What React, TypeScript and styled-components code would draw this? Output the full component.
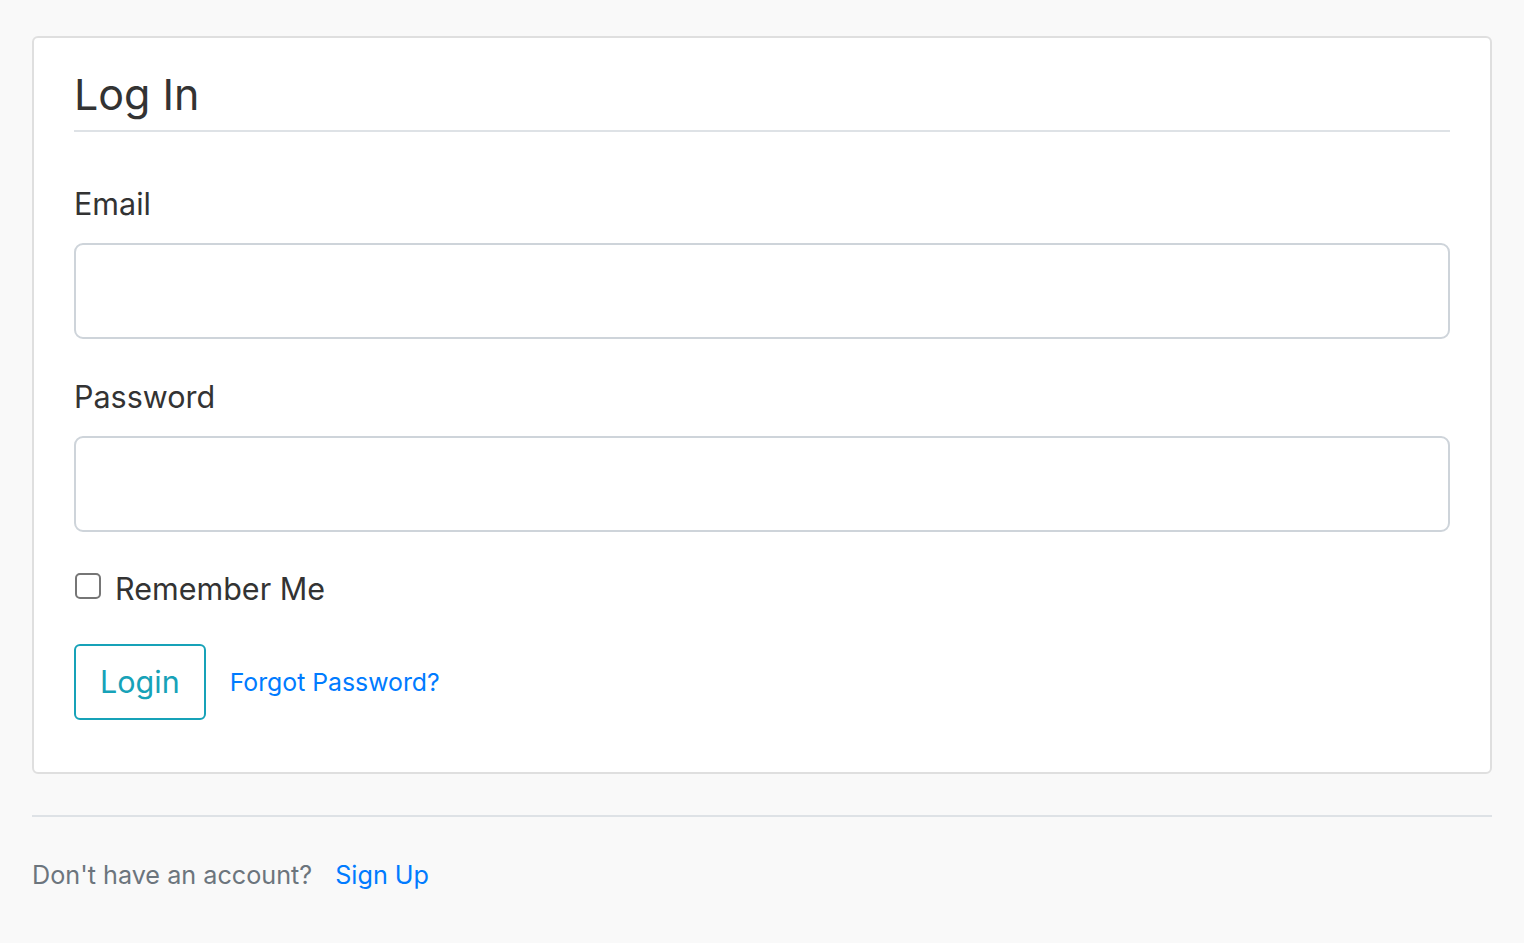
import React from "react";
import styled, { createGlobalStyle } from "styled-components";

const GlobalStyle = createGlobalStyle`
  html, body {
    margin: 0;
    padding: 0;
    background: #f9f9f9;
  }
  body {
    font-family: Inter, "Noto Sans", "Liberation Sans", sans-serif;
    color: #333333;
  }
  * { box-sizing: border-box; }
`;

const Page = styled.div`
  padding: 36px 32px 40px 32px;
  min-height: 943px;
`;

const Card = styled.div`
  background: #ffffff;
  border: 2px solid #dfdfdf;
  border-radius: 6px;
  padding: 29px 40px 52px 40px;
`;

const Title = styled.h1`
  margin: 0;
  font-size: 43px;
  line-height: 54px;
  font-weight: 400;
  color: #333333;
  padding-bottom: 9px;
  border-bottom: 2px solid #dee2e6;
`;

const Field = styled.div<{ $first?: boolean }>`
  display: flex;
  flex-direction: column;
  gap: 21px;
  margin-top: ${(p) => (p.$first ? "54px" : "40px")};
`;

const Label = styled.label`
  font-size: 30.5px;
  line-height: 36px;
  color: #333333;
`;

const Input = styled.input`
  display: block;
  width: 100%;
  height: 96px;
  border: 2px solid #ced4da;
  border-radius: 9px;
  background: #ffffff;
  font-size: 30px;
  padding: 0 20px;
  outline: none;
`;

const CheckRow = styled.label`
  display: flex;
  align-items: center;
  gap: 14px;
  margin-top: 39px;
  font-size: 30.5px;
  line-height: 36px;
  color: #333333;
`;

const Box = styled.span`
  display: inline-block;
  width: 26px;
  height: 26px;
  border: 2px solid #767676;
  border-radius: 5px;
  background: #ffffff;
  margin-top: -6px;
  margin-left: 1px;
`;

const Actions = styled.div`
  display: flex;
  align-items: center;
  gap: 24px;
  margin-top: 37px;
`;

const LoginButton = styled.button`
  height: 76px;
  padding: 0 24px;
  border: 2px solid #17a2b8;
  border-radius: 6px;
  background: transparent;
  color: #17a2b8;
  font-family: inherit;
  font-size: 30.5px;
  line-height: 1;
  cursor: pointer;
`;

const Link = styled.a<{ $size: number }>`
  color: #007bff;
  text-decoration: none;
  font-size: ${(p) => p.$size}px;
`;

const Divider = styled.hr`
  margin: 41px 0 0 0;
  border: 0;
  border-top: 2px solid #dee2e6;
`;

const Footer = styled.div`
  display: flex;
  align-items: baseline;
  gap: 23px;
  margin-top: 43px;
  font-size: 25.2px;
  line-height: 30px;
  color: #6c757d;
`;

export default function App() {
  return (
    <>
      <GlobalStyle />
      <Page>
        <Card>
          <Title>Log In</Title>
          <Field $first>
            <Label>Email</Label>
            <Input type="email" />
          </Field>
          <Field>
            <Label>Password</Label>
            <Input type="password" />
          </Field>
          <CheckRow>
            <Box />
            Remember Me
          </CheckRow>
          <Actions>
            <LoginButton>Login</LoginButton>
            <Link href="#" $size={24.8}>
              Forgot Password?
            </Link>
          </Actions>
        </Card>
        <Divider />
        <Footer>
          <span>Don't have an account?</span>
          <Link href="#" $size={25.2}>
            Sign Up
          </Link>
        </Footer>
      </Page>
    </>
  );
}
